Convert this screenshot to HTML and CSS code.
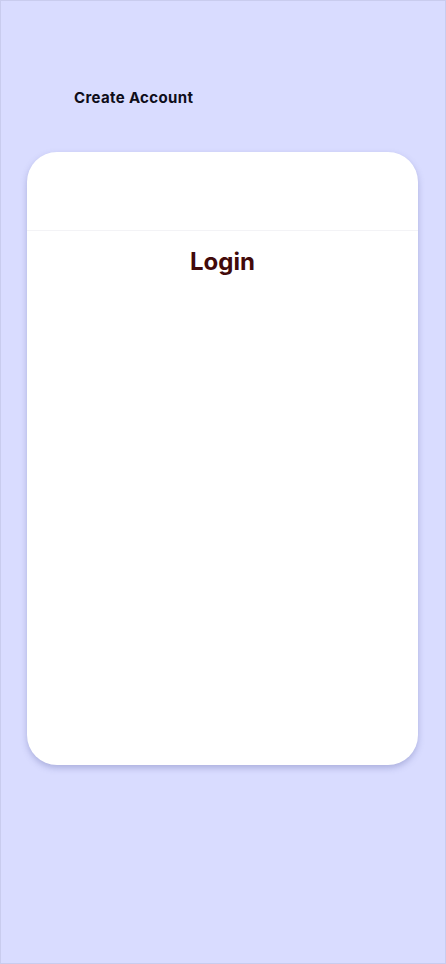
FILE: index.html
```html
<!DOCTYPE html>
<html>
<head>
<meta charset="utf-8">
<link rel="stylesheet" href="styles.css">
</head>
<body>
<div class="frame">
  <div class="top">
    <span class="create">Create Account</span>
  </div>
  <div class="card">
    <div class="card-head"></div>
    <h1 class="title">Login</h1>
  </div>
</div>
</body>
</html>
```
FILE: styles.css
```css
html, body {
  margin: 0;
  padding: 0;
}
body {
  width: 446px;
  height: 964px;
  font-family: Inter, "Noto Sans", sans-serif;
}
.frame {
  box-sizing: border-box;
  width: 446px;
  height: 964px;
  background: #d9dcff;
  border: 1px solid #c9ccee;
  padding: 86px 27px 0 26px;
}
.top {
  height: 65px;
  padding-left: 47px;
}
.create {
  font-size: 15px;
  font-weight: 700;
  color: #0e0d1a;
  letter-spacing: 0.35px;
  line-height: 20px;
}
.card {
  background: #ffffff;
  border-radius: 30px;
  height: 613px;
  box-shadow: 0 3px 6px rgba(90, 95, 160, 0.35);
}
.card-head {
  height: 78px;
  border-bottom: 1px solid #f3f3f6;
}
.title {
  margin: 16px 0 0 0;
  text-align: center;
  font-size: 24px;
  font-weight: 700;
  color: #420a0a;
  line-height: 30px;
}
```
